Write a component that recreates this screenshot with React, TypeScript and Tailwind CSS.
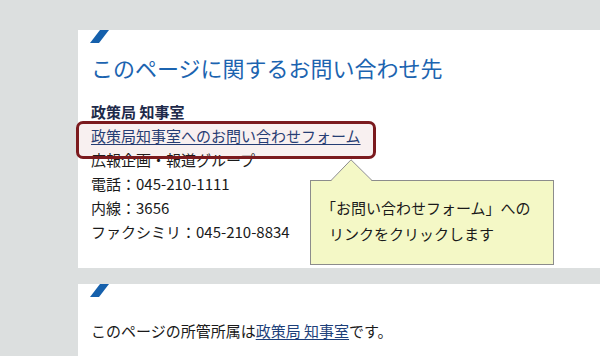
import React from "react";

const Slash = () => (
  <svg width="19" height="13" viewBox="0 0 19 13" className="absolute left-[12px] top-0">
    <polygon points="10,0 19,0 9,13 0,13" fill="#1560ac" />
  </svg>
);

export default function App() {
  return (
    <div
      className="relative w-[600px] h-[356px] overflow-hidden bg-[#dcdfdf] text-[#1a1a1a]"
      style={{ fontFamily: '"Noto Sans CJK JP", "Noto Sans", sans-serif' }}
    >
      <div className="flex flex-col gap-[16px] pt-[30px] pl-[78px]">
        <div className="relative h-[238px] bg-white pl-[13px]">
          <Slash />
          <h2 className="pt-[19px] text-[22px] leading-[37px] text-[#1c64b0]">
            このページに関するお問い合わせ先
          </h2>
          <div className="mt-[14px] text-[15px] leading-[24px]">
            <p className="font-bold text-[#1e2a4a]">政策局 知事室</p>
            <p>
              <a href="#" className="text-[#1d3f7a] underline underline-offset-2">
                政策局知事室へのお問い合わせフォーム
              </a>
            </p>
            <p>広報企画・報道グループ</p>
            <p>電話：045-210-1111</p>
            <p>内線：3656</p>
            <p>ファクシミリ：045-210-8834</p>
          </div>
        </div>
        <div className="relative h-[80px] bg-white pl-[13px]">
          <Slash />
          <p className="pt-[35px] text-[15px] leading-[24px]">
            このページの所管所属は
            <a href="#" className="text-[#1d3f7a] underline underline-offset-2">
              政策局 知事室
            </a>
            です。
          </p>
        </div>
      </div>

      {/* highlight box */}
      <div className="absolute left-[76px] top-[121px] w-[300px] h-[38px] rounded-[7px] border-[3px] border-[#7b1a1e] bg-[rgba(150,40,40,0.07)]" />

      {/* callout */}
      <div className="absolute left-[310px] top-[180px] w-[244px] h-[85px] border border-[#8c8c8c] bg-[#f4f8c6] pt-[14px] pl-[10px] text-[15px] leading-[26px] text-[#1a1a1a]">
        <p>「お問い合わせフォーム」への</p>
        <p className="pl-[8px]">リンクをクリックします</p>
      </div>
      <svg
        width="44"
        height="23"
        viewBox="0 0 44 23"
        className="absolute left-[330px] top-[159px]"
      >
        <polygon points="1,22 21,1 42,22" fill="#f4f8c6" />
        <polyline points="1,21.5 21,0.8 42,21.5" fill="none" stroke="#8c8c8c" strokeWidth="1" />
      </svg>
    </div>
  );
}
